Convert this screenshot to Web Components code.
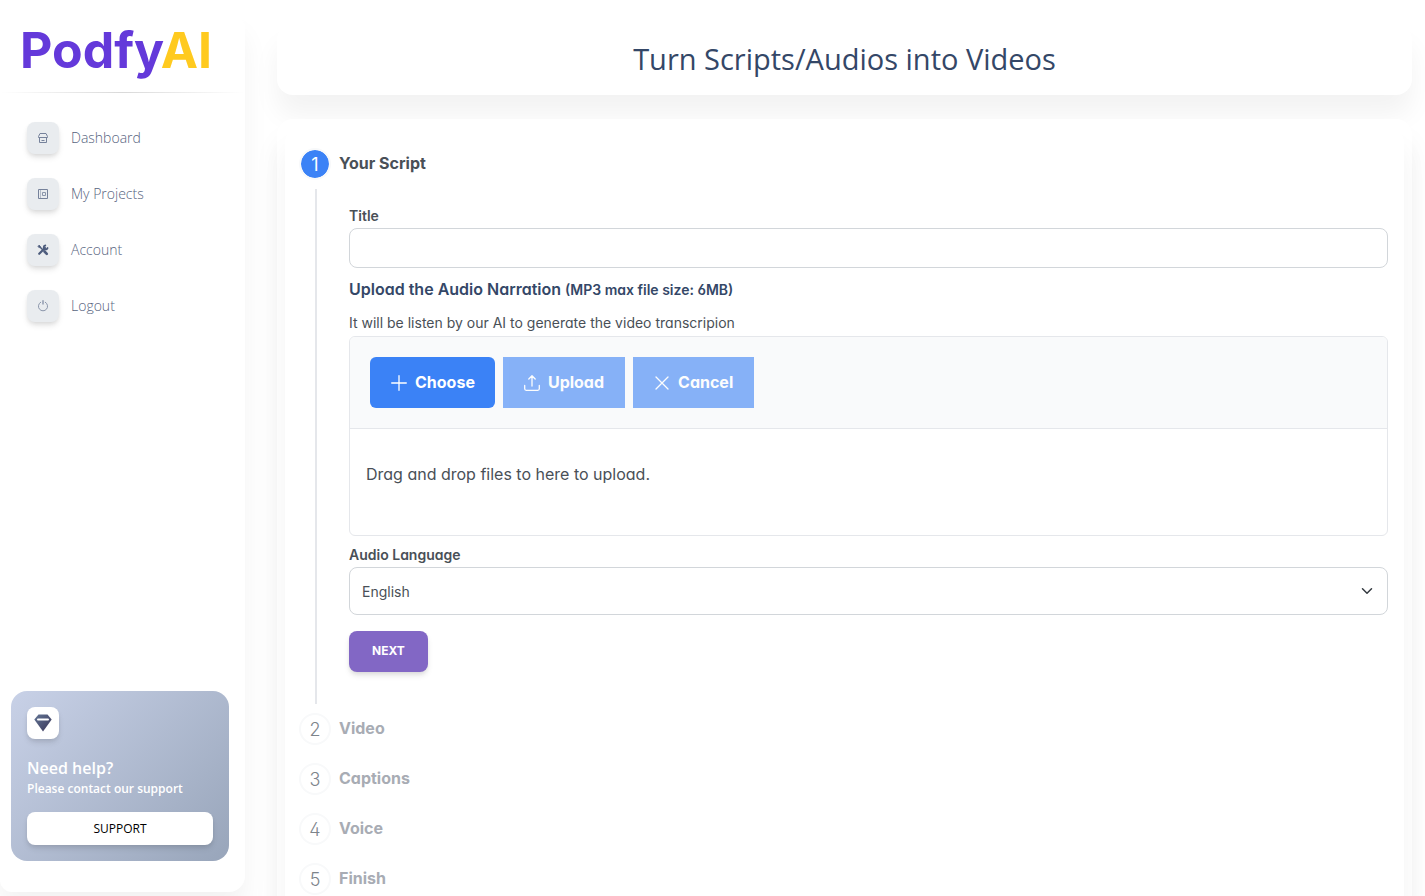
<!DOCTYPE html>
<html lang="en">
<head>
<meta charset="utf-8">
<meta name="viewport" content="width=device-width, initial-scale=1">
<title>PodfyAI</title>
<style>
  body {
    margin: 0;
    background: #fff;
    color: #495057;
    font-family: Inter, sans-serif;
    font-feature-settings: "cv02", "cv03", "cv04", "cv11";
    --brand-font: "Open Sans", sans-serif;
    --heading: #344767;
    --muted: #576480;
    --blue: #3b82f6;
    --soft: 0 20px 27px 0 rgba(0,0,0,0.05);
    --lift: 0 4px 6px -1px rgba(20,20,20,0.12), 0 2px 4px -1px rgba(20,20,20,0.07);
  }
</style>
</head>
<body>
<pf-shell>
  <pf-sidebar slot="side">
    <pf-nav-item icon="shop">Dashboard</pf-nav-item>
    <pf-nav-item icon="book">My Projects</pf-nav-item>
    <pf-nav-item icon="tools">Account</pf-nav-item>
    <pf-nav-item icon="power">Logout</pf-nav-item>
    <pf-help slot="bottom" heading="Need help?" action="SUPPORT">Please contact our support</pf-help>
  </pf-sidebar>
  <pf-title>Turn Scripts/Audios into Videos</pf-title>
  <pf-steps>
    <pf-step number="1" label="Your Script" active>
      <pf-input label="Title"></pf-input>
      <pf-upload heading="Upload the Audio Narration" limit="(MP3 max file size: 6MB)" hint="It will be listen by our AI to generate the video transcripion">Drag and drop files to here to upload.</pf-upload>
      <pf-select label="Audio Language" options="English"></pf-select>
      <pf-button>NEXT</pf-button>
    </pf-step>
    <pf-step number="2" label="Video"></pf-step>
    <pf-step number="3" label="Captions"></pf-step>
    <pf-step number="4" label="Voice"></pf-step>
    <pf-step number="5" label="Finish"></pf-step>
  </pf-steps>
</pf-shell>

<script>
const ICONS = {
  shop: '<svg viewBox="0 0 12 12" width="12" height="12" fill="none" stroke="#76829b"><path d="M3 1.500h6l1.500 3v1h-9v-1zM2.500 6v4.500h7V6M4.500 8.500h3"/></svg>',
  book: '<svg viewBox="0 0 12 12" width="12" height="12" fill="none" stroke="#76829b"><path d="M1.500 1.500h9v9h-9z"/><path d="M5.500 4.500h3v3h-3z" stroke="#8b96ab"/><path d="M3.500 2v8" stroke="#b4bcc9"/></svg>',
  tools: '<svg viewBox="0 0 12 12" width="12" height="12" fill="none" stroke="#4d5c7d" stroke-linecap="round"><path d="M2.500 2.500l3 3" stroke-width="1.500"/><path d="M7.500 7.500l2.300 2.300" stroke-width="2.600"/><path d="M2.200 9.800l5.800-5.800" stroke-width="2.200"/><path d="M8.300 1.500a2 2 0 1 0 2.300 2.500" stroke-width="1.800"/><path d="M1.200 2.200l1-1 1 1.500-.6.600z" fill="#4d5c7d"/></svg>',
  power: '<svg viewBox="0 0 12 12" width="12" height="12" fill="none" stroke="#8b96ab" stroke-linecap="round"><path d="M3.700 2.200a4.600 4.600 0 1 0 4.600 0"/><path d="M6 .8v3.200" stroke-width="1.400"/></svg>',
  diamond: '<svg viewBox="0 0 18 18" width="18" height="18"><defs><linearGradient id="g" x1="0" y1="0" x2="1" y2="1"><stop stop-color="#627594"/><stop offset="1" stop-color="#3a3558"/></linearGradient></defs><path fill="url(#g)" d="M4.500.5h9L17.700 5.500 9 17.500.3 5.500z"/><path stroke="#fff" stroke-width="2" stroke-linecap="round" d="M4 5.500h10"/></svg>',
  plus: '<svg viewBox="0 0 16 16" width="16" height="16" stroke="#fff" stroke-width="1.300" stroke-linecap="round"><path d="M8 .7v14.600M.7 8h14.600"/></svg>',
  upload: '<svg viewBox="0 0 16 16" width="16" height="16" fill="none" stroke="#fff" stroke-width="1.300" stroke-linecap="round" stroke-linejoin="round"><path d="M8 11V.800M4.800 4L8 .8 11.200 4M.7 10.500v3.300q0 1.500 1.500 1.500h11.600q1.500 0 1.500-1.500v-3.300"/></svg>',
  times: '<svg viewBox="0 0 16 16" width="16" height="16" stroke="#fff" stroke-width="1.300" stroke-linecap="round"><path d="M2 2l12 12M14 2L2 14"/></svg>',
  chevron: '<svg viewBox="0 0 12 12" width="12" height="12" fill="none" stroke="#343a40" stroke-width="1.500" stroke-linecap="round" stroke-linejoin="round"><path d="M1.500 3.800L6 8.200l4.500-4.400"/></svg>'
};

class PfElement extends HTMLElement {
  constructor() {
    super();
    this.attachShadow({ mode: 'open' });
  }
  connectedCallback() {
    this.shadowRoot.innerHTML = `<style>* { box-sizing: border-box; } svg { display: block; flex: none; }</style>` + this.render();
  }
  attr(name) {
    return this.getAttribute(name) || '';
  }
}

class Shell extends PfElement {
  render() {
    return `
    <style>
      :host { display: grid; grid-template-columns: 245px minmax(0, 1fr); }
      main {
        display: flex;
        flex-direction: column;
        gap: 24px;
        padding: 24px 13px 24px 32px;
      }
    </style>
    <slot name="side"></slot>
    <main><slot></slot></main>`;
  }
}

class Sidebar extends PfElement {
  render() {
    return `
    <style>
      :host {
        position: sticky;
        top: 12px;
        display: flex;
        flex-direction: column;
        box-sizing: border-box;
        height: calc(100vh - 16px);
        margin-top: 12px;
        padding-bottom: 31px;
        border-radius: 0 16px 16px 12px;
        background: #fff;
        box-shadow: var(--soft);
      }
      .logo {
        padding: 8px 20px 0;
        color: #6439da;
        font-size: 50px;
        font-weight: 700;
        line-height: 60px;
        text-decoration: none;
      }
      .logo span { color: #ffca1f; }
      hr {
        width: 100%;
        height: 1px;
        margin: 12px 0 29px;
        border: 0;
        background: linear-gradient(90deg, transparent, rgba(0,0,0,0.15), transparent);
      }
      nav { display: flex; flex-direction: column; gap: 24px; padding: 0 27px; }
      .bottom { margin: auto 16px 0 11px; }
    </style>
    <a class="logo" href="#">Podfy<span>AI</span></a>
    <hr>
    <nav><slot></slot></nav>
    <div class="bottom"><slot name="bottom"></slot></div>`;
  }
}

class NavItem extends PfElement {
  render() {
    return `
    <style>
      :host { display: block; }
      a {
        display: flex;
        align-items: center;
        gap: 12px;
        color: var(--muted);
        font: 300 14px/20px var(--brand-font);
        text-decoration: none;
      }
      .box {
        display: grid;
        place-items: center;
        width: 32px;
        height: 32px;
        border-radius: 8px;
        background: #e9ecef;
        box-shadow: var(--lift);
      }
    </style>
    <a href="#"><span class="box">${ICONS[this.attr('icon')]}</span><slot></slot></a>`;
  }
}

class Help extends PfElement {
  render() {
    return `
    <style>
      :host {
        display: block;
        padding: 16px;
        border-radius: 16px;
        background: linear-gradient(135deg, #c8d1e7, #98a5ba);
        color: #fff;
        font-family: var(--brand-font);
      }
      .box {
        display: grid;
        place-items: center;
        width: 32px;
        height: 32px;
        margin-bottom: 16px;
        border-radius: 8px;
        background: #fff;
        box-shadow: var(--lift);
      }
      h6 { margin: 0; font-size: 16px; font-weight: 600; line-height: 26px; }
      p { margin: 0 0 15px; font-size: 12px; font-weight: 600; line-height: 16px; }
      button {
        width: 100%;
        padding: 8px;
        border: 0;
        border-radius: 8px;
        background: #fff;
        color: #000;
        font: 400 12px/17px var(--brand-font);
        box-shadow: var(--lift);
      }
    </style>
    <div class="box">${ICONS.diamond}</div>
    <h6>${this.attr('heading')}</h6>
    <p><slot></slot></p>
    <button type="button">${this.attr('action')}</button>`;
  }
}

class Title extends PfElement {
  render() {
    return `
    <style>
      :host {
        display: block;
        padding: 15px 16px 16px;
        border-radius: 16px;
        background: #fff;
        box-shadow: var(--soft);
      }
      h1 {
        margin: 0;
        color: var(--heading);
        font: 500 29px/40px var(--brand-font);
        text-align: center;
      }
    </style>
    <h1><slot></slot></h1>`;
  }
}

class Steps extends PfElement {
  render() {
    return `
    <style>
      :host {
        display: block;
        padding: 8px;
        border-radius: 16px;
        background: #fff;
        box-shadow: var(--soft);
      }
      .inner {
        padding: 12px 16px 6px 14px;
        border-radius: 16px;
        background: #fff;
        box-shadow: var(--soft);
      }
    </style>
    <div class="inner"><slot></slot></div>`;
  }
}

class Step extends PfElement {
  render() {
    return `
    <style>
      :host { display: block; }
      header { display: flex; align-items: center; gap: 8px; height: 50px; }
      .number {
        display: grid;
        place-items: center;
        width: 32px;
        height: 32px;
        padding-top: 2px;
        border: 2px solid #f8f9fa;
        border-radius: 50%;
        font-size: 18px;
        font-weight: 300;
        line-height: 26px;
      }
      .label { padding-bottom: 2px; font-size: 16px; font-weight: 700; line-height: 24px; }
      :host(:not([active])) .number { color: #7d848b; }
      :host(:not([active])) .label { color: #a8acb4; }
      :host([active]) .number {
        background: var(--blue);
        background-clip: padding-box;
        color: #fff;
        font-weight: 400;
      }
      .body { display: none; }
      :host([active]) .body {
        display: flow-root;
        margin-left: 16px;
        padding: 15px 0 32px 32px;
        border-left: 2px solid #e5e7eb;
      }
    </style>
    <header><span class="number">${this.attr('number')}</span><span class="label">${this.attr('label')}</span></header>
    <div class="body"><slot></slot></div>`;
  }
}

class Input extends PfElement {
  render() {
    return `
    <style>
      :host { display: block; }
      label { display: block; font-size: 14px; font-weight: 600; line-height: 24px; }
      input {
        display: block;
        width: 100%;
        height: 40px;
        padding: 8px 12px;
        border: 1px solid #d2d6da;
        border-radius: 8px;
        background: #fff;
        color: inherit;
        font: inherit;
        font-size: 14px;
      }
    </style>
    <label for="field">${this.attr('label')}</label>
    <input id="field" type="text">`;
  }
}

class Select extends PfElement {
  render() {
    const options = this.attr('options').split(',').map(o => `<option>${o}</option>`).join('');
    return `
    <style>
      :host { display: block; margin-top: 7px; }
      label { display: block; font-size: 14px; font-weight: 600; line-height: 24px; }
      .wrap { display: grid; align-items: center; }
      select, svg { grid-area: 1 / 1; }
      select {
        appearance: none;
        width: 100%;
        height: 48px;
        padding: 0 40px 0 12px;
        border: 1px solid #d2d6da;
        border-radius: 8px;
        background: #fff;
        color: inherit;
        font: inherit;
        font-size: 14px;
      }
      svg { justify-self: end; margin-right: 15px; pointer-events: none; }
    </style>
    <label for="field">${this.attr('label')}</label>
    <div class="wrap"><select id="field">${options}</select>${ICONS.chevron}</div>`;
  }
}

class Upload extends PfElement {
  render() {
    return `
    <style>
      :host { display: block; margin-top: 8px; }
      h6 { margin: 0; color: var(--heading); font-size: 16px; font-weight: 600; line-height: 26px; }
      small { font-size: 14px; }
      p { margin: 0; }
      .hint { margin-top: 7px; font-size: 14px; line-height: 26px; }
      .panel { border: 1px solid #e5e7eb; border-radius: 6px; overflow: hidden; }
      .bar {
        display: flex;
        gap: 8px;
        padding: 20px;
        border-bottom: 1px solid #e5e7eb;
        background: #f9fafb;
      }
      button {
        display: flex;
        align-items: center;
        gap: 8px;
        padding: 13px 21px;
        border: 0;
        background: var(--blue);
        color: #fff;
        font: inherit;
        font-size: 16px;
        font-weight: 700;
        line-height: 25px;
      }
      button:first-child { padding: 13px 20px 13px 21px; border-radius: 6px; }
      button:disabled { opacity: 0.6; }
      .drop { padding: 32px 16px 48px; font-size: 16px; line-height: 26px; }
    </style>
    <h6>${this.attr('heading')} <small>${this.attr('limit')}</small></h6>
    <p class="hint">${this.attr('hint')}</p>
    <div class="panel">
      <div class="bar">
        <button type="button">${ICONS.plus}Choose</button>
        <button type="button" disabled>${ICONS.upload}Upload</button>
        <button type="button" disabled>${ICONS.times}Cancel</button>
      </div>
      <p class="drop"><slot></slot></p>
    </div>`;
  }
}

class Button extends PfElement {
  render() {
    return `
    <style>
      :host { display: block; margin-top: 16px; }
      button {
        display: block;
        padding: 11px 23px 13px;
        border: 0;
        border-radius: 8px;
        background: #8267c5;
        color: #fff;
        font: inherit;
        font-size: 12px;
        font-weight: 700;
        line-height: 17px;
        box-shadow: var(--lift);
      }
    </style>
    <button type="button"><slot></slot></button>`;
  }
}

customElements.define('pf-shell', Shell);
customElements.define('pf-sidebar', Sidebar);
customElements.define('pf-nav-item', NavItem);
customElements.define('pf-help', Help);
customElements.define('pf-title', Title);
customElements.define('pf-steps', Steps);
customElements.define('pf-step', Step);
customElements.define('pf-input', Input);
customElements.define('pf-select', Select);
customElements.define('pf-upload', Upload);
customElements.define('pf-button', Button);
</script>
</body>
</html>
